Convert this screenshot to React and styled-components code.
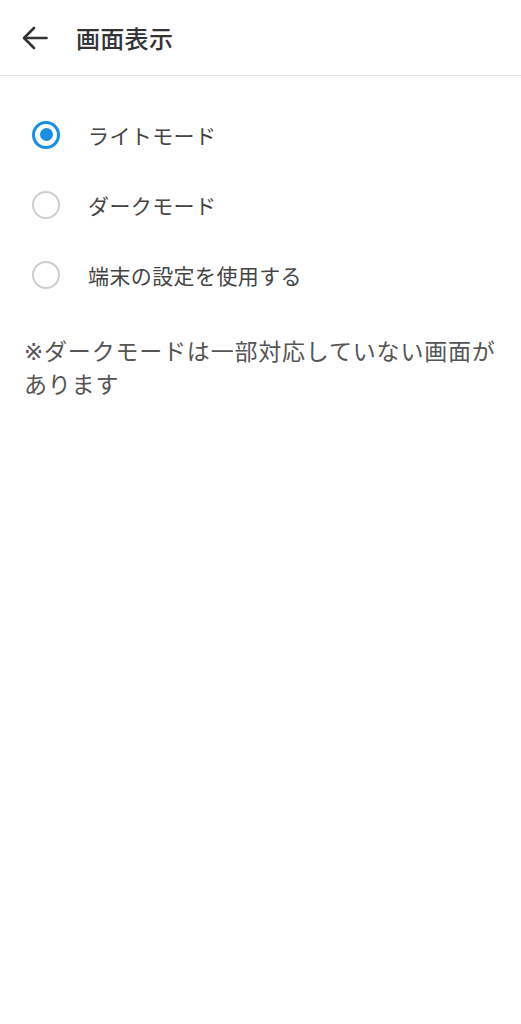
import React, { useState } from 'react'
import styled, { createGlobalStyle } from 'styled-components'

const GlobalStyle = createGlobalStyle`
  html, body {
    margin: 0;
    padding: 0;
    background: #ffffff;
  }
  body {
    font-family: "Noto Sans CJK JP", "Noto Sans", sans-serif;
    color: #444444;
  }
`

const Page = styled.div`
  width: 100%;
  min-height: 1024px;
  background: #ffffff;
`

const Header = styled.header`
  height: 75px;
  display: flex;
  align-items: center;
  padding-left: 22px;
  border-bottom: 1px solid #e2e2e2;
`

const BackButton = styled.button`
  display: flex;
  align-items: center;
  justify-content: center;
  width: 26px;
  height: 26px;
  padding: 0;
  margin: 0 28px 0 0;
  border: none;
  background: none;
  color: #333333;
`

const Title = styled.h1`
  margin: 0;
  font-size: 24px;
  font-weight: 500;
  color: #333333;
  letter-spacing: 0.3px;
`

const List = styled.div`
  display: flex;
  flex-direction: column;
  padding-top: 24px;
`

const Row = styled.label`
  height: 70px;
  display: flex;
  align-items: center;
  padding-left: 32px;
  cursor: pointer;
`

const Radio = styled.span`
  box-sizing: border-box;
  width: 28px;
  height: 28px;
  border-radius: 50%;
  border: ${p => (p.$checked ? '3px solid #1a8ee0' : '2.5px solid #cfcfcf')};
  display: flex;
  align-items: center;
  justify-content: center;
  margin-right: 28px;
  margin-top: -1px;

  &::after {
    content: '';
    width: 13px;
    height: 13px;
    border-radius: 50%;
    background: #1a8ee0;
    display: ${p => (p.$checked ? 'block' : 'none')};
  }
`

const Label = styled.span`
  font-size: 21px;
  color: #444444;
  letter-spacing: 0.4px;
`

// DejaVu first so the ※ comes out narrow, the kana/kanji fall through to Noto CJK
const Note = styled.p`
  margin: 26px 20px 0 24px;
  font-family: "DejaVu Sans", "Noto Sans CJK JP", sans-serif;
  font-size: 23px;
  line-height: 33px;
  color: #555555;
  letter-spacing: 0.8px;
`

const options = ['ライトモード', 'ダークモード', '端末の設定を使用する']

export default function App() {
  const [selected, setSelected] = useState(0)

  return (
    <Page>
      <GlobalStyle />
      <Header>
        <BackButton aria-label="戻る">
          <svg width="26" height="24" viewBox="0 0 26 24" fill="none" stroke="currentColor" strokeWidth="2.6" strokeLinecap="round" strokeLinejoin="round">
            <path d="M24.5 12H2.5" />
            <path d="M12 2L2 12l10 10" />
          </svg>
        </BackButton>
        <Title>画面表示</Title>
      </Header>
      <List>
        {options.map((o, i) => (
          <Row key={o} onClick={() => setSelected(i)}>
            <Radio $checked={selected === i} />
            <Label>{o}</Label>
          </Row>
        ))}
      </List>
      <Note>※ダークモードは一部対応していない画面があります</Note>
    </Page>
  )
}
